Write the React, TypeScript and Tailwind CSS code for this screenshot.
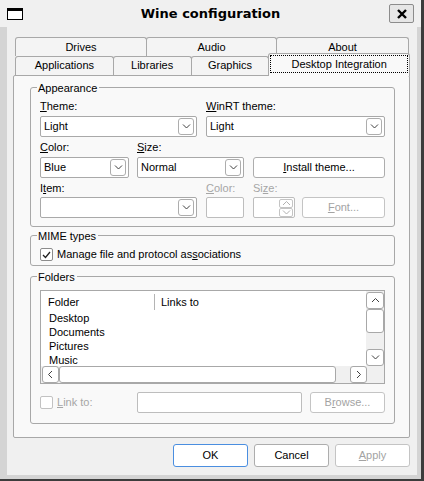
import React from "react";

const U = ({ children }: { children: React.ReactNode }) => (
  <span className="underline underline-offset-[1px]">{children}</span>
);

const Chevron = ({ dir = "down", color = "#404040" }: { dir?: "down" | "up" | "left" | "right"; color?: string }) => {
  const d = {
    down: "M1 1.5 L4.5 5 L8 1.5",
    up: "M1 5 L4.5 1.5 L8 5",
    left: "M5 1 L1.5 4.5 L5 8",
    right: "M2 1 L5.5 4.5 L2 8",
  }[dir];
  const vertical = dir === "down" || dir === "up";
  return (
    <svg width={vertical ? 9 : 7} height={vertical ? 7 : 9} viewBox={vertical ? "0 0 9 7" : "0 0 7 9"}>
      <path d={d} fill="none" stroke={color} strokeWidth="1" />
    </svg>
  );
};

const Combo = ({ value, className }: { value?: string; className: string }) => (
  <div className={`flex h-[21px] items-center rounded-[2px] border border-[#a9a9a9] bg-white pl-[3px] pr-[2px] ${className}`}>
    <span className="flex-1">{value}</span>
    <div className="flex h-[17px] w-[16px] items-center justify-center rounded-[3px] border border-[#adadad] bg-white">
      <Chevron />
    </div>
  </div>
);

const Button = ({
  children,
  disabled,
  className,
}: {
  children: React.ReactNode;
  disabled?: boolean;
  className: string;
}) => (
  <div
    className={`flex items-center justify-center rounded-[3px] border bg-white ${
      disabled ? "border-[#c4c4c4] text-[#a3a3a3]" : "border-[#adadad]"
    } ${className}`}
  >
    {children}
  </div>
);

const Check = ({ checked, disabled }: { checked?: boolean; disabled?: boolean }) => (
  <div
    className={`flex h-[13px] w-[13px] items-center justify-center rounded-[2px] border bg-white ${
      disabled ? "border-[#c2c2c2]" : "border-[#8c8c8c]"
    }`}
  >
    {checked && (
      <svg width="9" height="8" viewBox="0 0 9 8">
        <path d="M1 4 L3.5 6.5 L8 1" fill="none" stroke="#202020" strokeWidth="1.3" />
      </svg>
    )}
  </div>
);

const Group = ({
  title,
  className,
  children,
}: {
  title: string;
  className: string;
  children?: React.ReactNode;
}) => (
  <div className={`relative rounded-[3px] border border-[#a8a8a8] ${className}`}>
    <span className="absolute -top-[6px] left-[6px] bg-[#f9f9f9] pl-px pr-[2px] leading-[13px]">{title}</span>
    {children}
  </div>
);

const Tab = ({ label, className }: { label: string; className: string }) => (
  <div
    className={`flex items-center justify-center rounded-t-[3px] border border-b-0 border-[#a8a8a8] bg-[#f4f4f4] ${className}`}
  >
    {label}
  </div>
);

const folders = ["Desktop", "Documents", "Pictures", "Music"];

export default function App() {
  return (
    <div className="flex h-[481px] w-[424px] flex-col border-r-[3px] border-b-[2px] border-[#3c3c3c] bg-[#f0f0f0] font-['Liberation_Sans',Arial,sans-serif] text-[11px] leading-[13px] text-black">
      {/* title bar */}
      <div className="grid h-[27px] grid-cols-[1fr_auto_1fr] items-center">
        <div className="pl-[7px]">
          <div className="h-[12px] w-[16px] border border-t-[3px] border-black bg-white" />
        </div>
        <div className="font-['DejaVu_Sans',sans-serif] text-[13px] font-bold leading-[16px]">Wine configuration</div>
        <div className="flex justify-end pr-[7px]">
          <div className="flex h-[19px] w-[25px] items-center justify-center rounded-[2px] border border-[#8c8c8c] bg-[#e6e6e6]">
            <svg width="10" height="10" viewBox="0 0 10 10">
              <path d="M1 1 L9 9 M9 1 L1 9" stroke="#000" strokeWidth="2.4" />
            </svg>
          </div>
        </div>
      </div>

      {/* client area */}
      <div className="flex flex-1 flex-col border-l-[7px] border-r-[4px] border-b-[4px] border-[#d4d4d4] pt-[10px] pl-[6px] pr-[7px]">
        {/* tabs */}
        <div className="flex h-[19px] pl-[2px]">
          <Tab label="Drives" className="w-[132px]" />
          <Tab label="Audio" className="-ml-px w-[131px]" />
          <Tab label="About" className="-ml-px w-[133px]" />
        </div>
        <div className="flex h-[19px] items-end pl-[2px]">
          <Tab label="Applications" className="h-[19px] w-[99px] pb-[2px]" />
          <Tab label="Libraries" className="-ml-px h-[19px] w-[79px] pb-[2px]" />
          <Tab label="Graphics" className="-ml-px h-[19px] w-[79px] pb-[2px]" />
          <div className="relative z-10 -mb-px -ml-px flex h-[23px] w-[142px] items-start rounded-t-[3px] border border-b-0 border-[#a8a8a8] bg-[#f9f9f9] px-px pt-px">
            <div className="flex h-[18px] flex-1 items-center justify-center border border-dotted border-black">
              Desktop Integration
            </div>
          </div>
        </div>

        {/* panel */}
        <div className="flex h-[363px] flex-col rounded-[2px] border border-[#a8a8a8] bg-[#f9f9f9] pt-[11px] pl-[16px]">
          <Group title="Appearance" className="h-[140px] w-[365px] pt-[12px] pl-[9px]">
            <div className="flex gap-[9px]">
              <div className="w-[157px]">
                <div>
                  <U>T</U>heme:
                </div>
                <Combo value="Light" className="mt-[3px] w-[157px]" />
              </div>
              <div className="w-[179px]">
                <div>
                  <U>W</U>inRT theme:
                </div>
                <Combo value="Light" className="mt-[3px] w-[179px]" />
              </div>
            </div>
            <div className="mt-[4px] flex">
              <div className="w-[89px]">
                <div>
                  <U>C</U>olor:
                </div>
                <Combo value="Blue" className="mt-[3px] w-[89px]" />
              </div>
              <div className="ml-[8px] w-[107px]">
                <div>
                  <U>S</U>ize:
                </div>
                <Combo value="Normal" className="mt-[3px] w-[107px]" />
              </div>
              <div className="ml-[9px] w-[132px]">
                <div className="h-[13px]" />
                <Button className="mt-[3px] h-[21px] w-[132px]">
                  <span>
                    <U>I</U>nstall theme...
                  </span>
                </Button>
              </div>
            </div>
            <div className="mt-[4px] flex">
              <div className="w-[157px]">
                <div>
                  I<U>t</U>em:
                </div>
                <Combo className="mt-[2px] w-[157px]" />
              </div>
              <div className="ml-[9px] w-[38px] text-[#a6a6a6]">
                <div>
                  <U>C</U>olor:
                </div>
                <div className="mt-[2px] h-[21px] w-[38px] rounded-[2px] border border-[#bdbdbd] bg-white" />
              </div>
              <div className="ml-[9px] w-[42px] text-[#a6a6a6]">
                <div>
                  Si<U>z</U>e:
                </div>
                <div className="mt-[2px] flex h-[21px] w-[42px] justify-end rounded-[2px] border border-[#bdbdbd] bg-white p-px">
                  <div className="flex w-[14px] flex-col">
                    <div className="flex flex-1 items-center justify-center rounded-[2px] border border-[#c4c4c4]">
                      <Chevron dir="up" color="#b0b0b0" />
                    </div>
                    <div className="flex flex-1 items-center justify-center rounded-[2px] border border-[#c4c4c4]">
                      <Chevron dir="down" color="#b0b0b0" />
                    </div>
                  </div>
                </div>
              </div>
              <div className="ml-[7px] w-[83px]">
                <div className="h-[13px]" />
                <Button disabled className="mt-[2px] h-[21px] w-[83px]">
                  <span>
                    <U>F</U>ont...
                  </span>
                </Button>
              </div>
            </div>
          </Group>

          <Group title="MIME types" className="mt-[8px] h-[31px] w-[365px] pt-[12px] pl-[9px]">
            <div className="flex items-center gap-[4px]">
              <Check checked />
              <span>
                Manage file and protocol as<U>s</U>ociations
              </span>
            </div>
          </Group>

          <Group title="Folders" className="mt-[10px] h-[148px] w-[365px] pt-[13px] pl-[9px]">
            <div className="flex h-[94px] w-[345px] flex-col border border-[#a8a8a8] bg-white">
              <div className="flex h-[75px]">
                <div className="flex-1 pt-[2px]">
                  <div className="flex h-[18px] items-center">
                    <div className="w-[113px] pl-[7px]">Folder</div>
                    <div className="h-[16px] w-px bg-[#b4b4b4]" />
                    <div className="pl-[6px]">Links to</div>
                  </div>
                  {folders.map((f) => (
                    <div key={f} className="flex h-[14px] items-center pl-[8px]">
                      {f}
                    </div>
                  ))}
                </div>
                <div className="flex w-[18px] flex-col bg-[#f0f0f0] pt-px">
                  <div className="flex h-[17px] items-center justify-center rounded-[3px] border border-[#a8a8a8] bg-white">
                    <Chevron dir="up" />
                  </div>
                  <div className="h-[24px] rounded-[3px] border border-[#a8a8a8] bg-white" />
                  <div className="flex-1" />
                  <div className="flex h-[17px] items-center justify-center rounded-[3px] border border-[#a8a8a8] bg-white">
                    <Chevron dir="down" />
                  </div>
                </div>
              </div>
              <div className="flex h-[17px] bg-[#f0f0f0]">
                <div className="ml-px flex w-[17px] items-center justify-center rounded-[3px] border border-[#a8a8a8] bg-white">
                  <Chevron dir="left" />
                </div>
                <div className="w-[277px] rounded-[3px] border border-[#a8a8a8] bg-white" />
                <div className="flex-1" />
                <div className="flex w-[17px] items-center justify-center rounded-[3px] border border-[#a8a8a8] bg-white">
                  <Chevron dir="right" />
                </div>
                <div className="w-[17px]" />
              </div>
            </div>
            <div className="mt-[8px] flex h-[21px] items-center">
              <Check disabled />
              <span className="ml-[4px] w-[80px] text-[#a6a6a6]">
                <U>L</U>ink to:
              </span>
              <div className="h-[21px] w-[165px] rounded-[2px] border border-[#bdbdbd] bg-white" />
              <Button disabled className="ml-[8px] h-[21px] w-[75px]">
                <span>
                  B<U>r</U>owse...
                </span>
              </Button>
            </div>
          </Group>
        </div>

        {/* dialog buttons */}
        <div className="mt-[6px] flex justify-end gap-[6px]">
          <Button className="h-[23px] w-[75px] !border-[#4a8ee0]">OK</Button>
          <Button className="h-[23px] w-[75px]">Cancel</Button>
          <Button disabled className="h-[23px] w-[75px]">
            <span>
              <U>A</U>pply
            </span>
          </Button>
        </div>
      </div>
    </div>
  );
}
